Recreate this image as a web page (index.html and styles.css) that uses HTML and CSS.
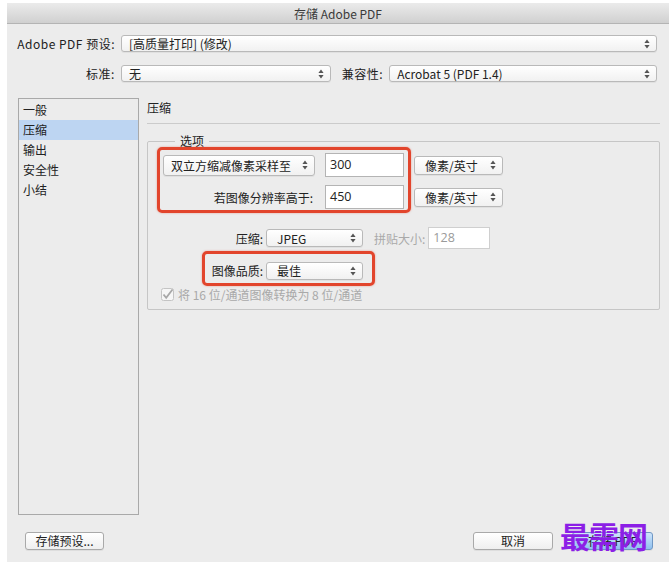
FILE: index.html
```html
<!DOCTYPE html>
<html lang="zh-CN">
<head>
  <meta charset="UTF-8" />
  <meta name="viewport" content="width=device-width, initial-scale=1.0" />
  <title>存储 Adobe PDF</title>
  <link rel="stylesheet" href="styles.css">
</head>
<body>
  <div class="window">
    <div class="titlebar">存储 Adobe PDF</div>

    <div class="top">
      <div class="row">
        <span class="lbl lbl-main">Adobe PDF 预设:</span>
        <div class="select sel-preset"><span>[高质量打印] (修改)</span><i class="arrows"></i></div>
      </div>
      <div class="row">
        <span class="lbl lbl-main">标准:</span>
        <div class="select sel-std"><span>无</span><i class="arrows"></i></div>
        <span class="lbl lbl-compat">兼容性:</span>
        <div class="select sel-compat"><span>Acrobat 5 (PDF 1.4)</span><i class="arrows"></i></div>
      </div>
    </div>

    <div class="main">
      <ul class="nav">
        <li>一般</li>
        <li class="active">压缩</li>
        <li>输出</li>
        <li>安全性</li>
        <li>小结</li>
      </ul>

      <div class="panel">
        <div class="panel-title">压缩</div>
        <fieldset class="group">
          <legend>选项</legend>

          <div class="sample">
            <div class="select sel-method"><span>双立方缩减像素采样至</span><i class="arrows"></i></div>
            <div class="field">300</div>
            <div class="select sel-unit"><span>像素/英寸</span><i class="arrows"></i></div>
            <span class="lbl lbl-above">若图像分辨率高于:</span>
            <div class="field">450</div>
            <div class="select sel-unit"><span>像素/英寸</span><i class="arrows"></i></div>
            <span class="mark mark-sample"></span>
          </div>

          <div class="opt-row row-comp">
            <span class="lbl lbl-opt">压缩:</span>
            <div class="select sel-opt"><span>JPEG</span><i class="arrows"></i></div>
            <span class="lbl lbl-tile">拼贴大小:</span>
            <div class="field field-tile">128</div>
          </div>

          <div class="opt-row row-quality">
            <span class="lbl lbl-opt">图像品质:</span>
            <div class="select sel-opt"><span>最佳</span><i class="arrows"></i></div>
            <span class="mark mark-quality"></span>
          </div>

          <div class="check-row">
            <svg class="check" width="13" height="13" viewBox="0 0 13 13">
              <rect x="0.5" y="0.5" width="12" height="12" rx="2" fill="#f6f6f6" stroke="#c4c4c4"/>
              <path d="M2.5 6.5 L5.2 9.8 L11.5 1.5" fill="none" stroke="#a8a8a8" stroke-width="1.8"/>
            </svg>
            <span>将 16 位/通道图像转换为 8 位/通道</span>
          </div>
        </fieldset>
      </div>
    </div>

    <div class="footer">
      <div class="btn">存储预设...</div>
      <div class="actions">
        <div class="btn btn-cancel">取消</div>
        <div class="btn btn-primary">存储 PDF</div>
        <span class="watermark">最需网</span>
      </div>
    </div>
  </div>
</body>
</html>
```

FILE: styles.css
```css
:root {
  --win-bg: #ececec;
  --text: #222;
  --muted: #a9a9a9;
  --border: #b9b9b9;
  --mark: #e2452c;
}
* {
  margin: 0;
  padding: 0;
  box-sizing: border-box;
}
body {
  background: #fff;
  font-family: "Noto Sans CJK SC", "Noto Sans", sans-serif;
  font-size: 12px;
  color: var(--text);
  overflow: hidden;
}
.window {
  margin: 3px 0 0 7px;
  width: 662px;
  height: 559px;
  background: var(--win-bg);
  display: flex;
  flex-direction: column;
}
.titlebar {
  height: 21px;
  line-height: 21px;
  text-align: center;
  color: #3a3a3a;
  background: linear-gradient(#ebebeb, #d0d0d0);
  border-bottom: 1px solid #b4b4b4;
}
.top {
  padding: 11px 12px 0 10px;
  display: flex;
  flex-direction: column;
  gap: 13px;
}
.row {
  display: flex;
  align-items: center;
  height: 17px;
}
.lbl {
  white-space: nowrap;
}
.lbl-main {
  width: 104px;
  padding-right: 6px;
  text-align: right;
  letter-spacing: 0.5px;
}
.lbl-compat {
  margin: 0 6px 0 11px;
  letter-spacing: 0.5px;
}

/* popup buttons */
.select {
  position: relative;
  display: flex;
  align-items: center;
  height: 17px;
  padding: 0 18px 0 7px;
  background: linear-gradient(#ffffff, #f1f1f1);
  border: 1px solid var(--border);
  border-radius: 3px;
  box-shadow: 0 1px 0 rgba(0, 0, 0, 0.05);
  white-space: nowrap;
}
.arrows {
  position: absolute;
  right: 6px;
  top: 50%;
  width: 6px;
  height: 10px;
  margin-top: -5px;
  background: url("data:image/svg+xml,%3Csvg xmlns='http://www.w3.org/2000/svg' width='6' height='10' viewBox='0 0 6 10'%3E%3Cpath d='M3 0.5 L5.6 4 L0.4 4 Z M3 9.5 L5.6 6 L0.4 6 Z' fill='%23555'/%3E%3C/svg%3E") no-repeat;
}
.sel-preset { width: 536px; }
.sel-std { width: 210px; }
.sel-compat { width: 268px; }

.main {
  display: flex;
  gap: 8px;
  margin: 16px 9px 0 11px;
  height: 417px;
}
.nav {
  list-style: none;
  width: 121px;
  border: 1px solid #a9a9a9;
  padding-top: 1px;
}
.nav li {
  height: 20px;
  line-height: 20px;
  padding-left: 4px;
}
.nav li.active {
  background: #bdd5f2;
}
.panel {
  flex: 1;
}
.panel-title {
  height: 26px;
  line-height: 20px;
  border-bottom: 1px solid #cbcbcb;
}
.group {
  margin-top: 9px;
  border: 1px solid #c6c6c6;
  border-radius: 2px;
  padding: 4px 10px 7px 15px;
}
.group legend {
  margin-left: 12px;
  padding: 0 5px;
  line-height: 16px;
}
.field {
  height: 24px;
  line-height: 22px;
  padding-left: 4px;
  background: #fff;
  border: 1px solid #b4b4b4;
  font-family: "Open Sans", "Noto Sans", sans-serif;
  font-size: 12.5px;
}
.sample {
  position: relative;
  display: grid;
  grid-template-columns: 152px 79px 89px;
  grid-auto-rows: 24px;
  column-gap: 10px;
  row-gap: 8px;
  align-items: center;
  width: 340px;
}
.sel-method { height: 21px; }
.sel-unit { height: 19px; padding-left: 10px; }
.lbl-above {
  text-align: right;
  padding-right: 2px;
}
.mark {
  position: absolute;
  border: 3px solid var(--mark);
  border-radius: 5px;
  box-shadow: 0 0 2px rgba(226, 69, 44, 0.5);
}
.mark-sample {
  left: -6px;
  top: -6px;
  width: 254px;
  height: 66px;
}
.opt-row {
  position: relative;
  display: flex;
  align-items: center;
}
.row-comp {
  margin-top: 18px;
  height: 22px;
}
.row-quality {
  margin-top: 12px;
  height: 19px;
}
.lbl-opt {
  width: 100px;
  text-align: right;
  margin-right: 3px;
}
.sel-opt {
  width: 97px;
  height: 18px;
  padding-left: 10px;
}
.lbl-tile {
  color: var(--muted);
  margin: 0 3px 0 11px;
}
.field-tile {
  width: 62px;
  height: 22px;
  line-height: 20px;
  color: #9a9a9a;
  border-color: #cfcfcf;
}
.mark-quality {
  left: 39px;
  top: -10px;
  width: 173px;
  height: 35px;
}
.check-row {
  display: flex;
  align-items: center;
  gap: 4px;
  margin-top: 6px;
  margin-left: -2px;
  height: 16px;
  color: var(--muted);
}
.footer {
  display: flex;
  justify-content: space-between;
  align-items: center;
  padding: 17px 16px 0 18px;
}
.actions {
  position: relative;
  display: flex;
  gap: 19px;
}
.btn {
  height: 18px;
  line-height: 16px;
  padding: 0 8px;
  text-align: center;
  background: linear-gradient(#ffffff, #efefef);
  border: 1px solid #a9a9a9;
  border-radius: 3px;
  box-shadow: 0 1px 0 rgba(0, 0, 0, 0.06);
}
.footer > .btn { width: 79px; }
.btn-cancel { width: 80px; }
.btn-primary {
  width: 81px;
  background: linear-gradient(#cfe5fb, #8fc0ee);
  border-color: #6f97c4;
}
.watermark {
  position: absolute;
  right: 6px;
  top: -14px;
  font-size: 30px;
  line-height: 34px;
  font-weight: bold;
  color: #8c1fe6;
  letter-spacing: -1px;
}
```
